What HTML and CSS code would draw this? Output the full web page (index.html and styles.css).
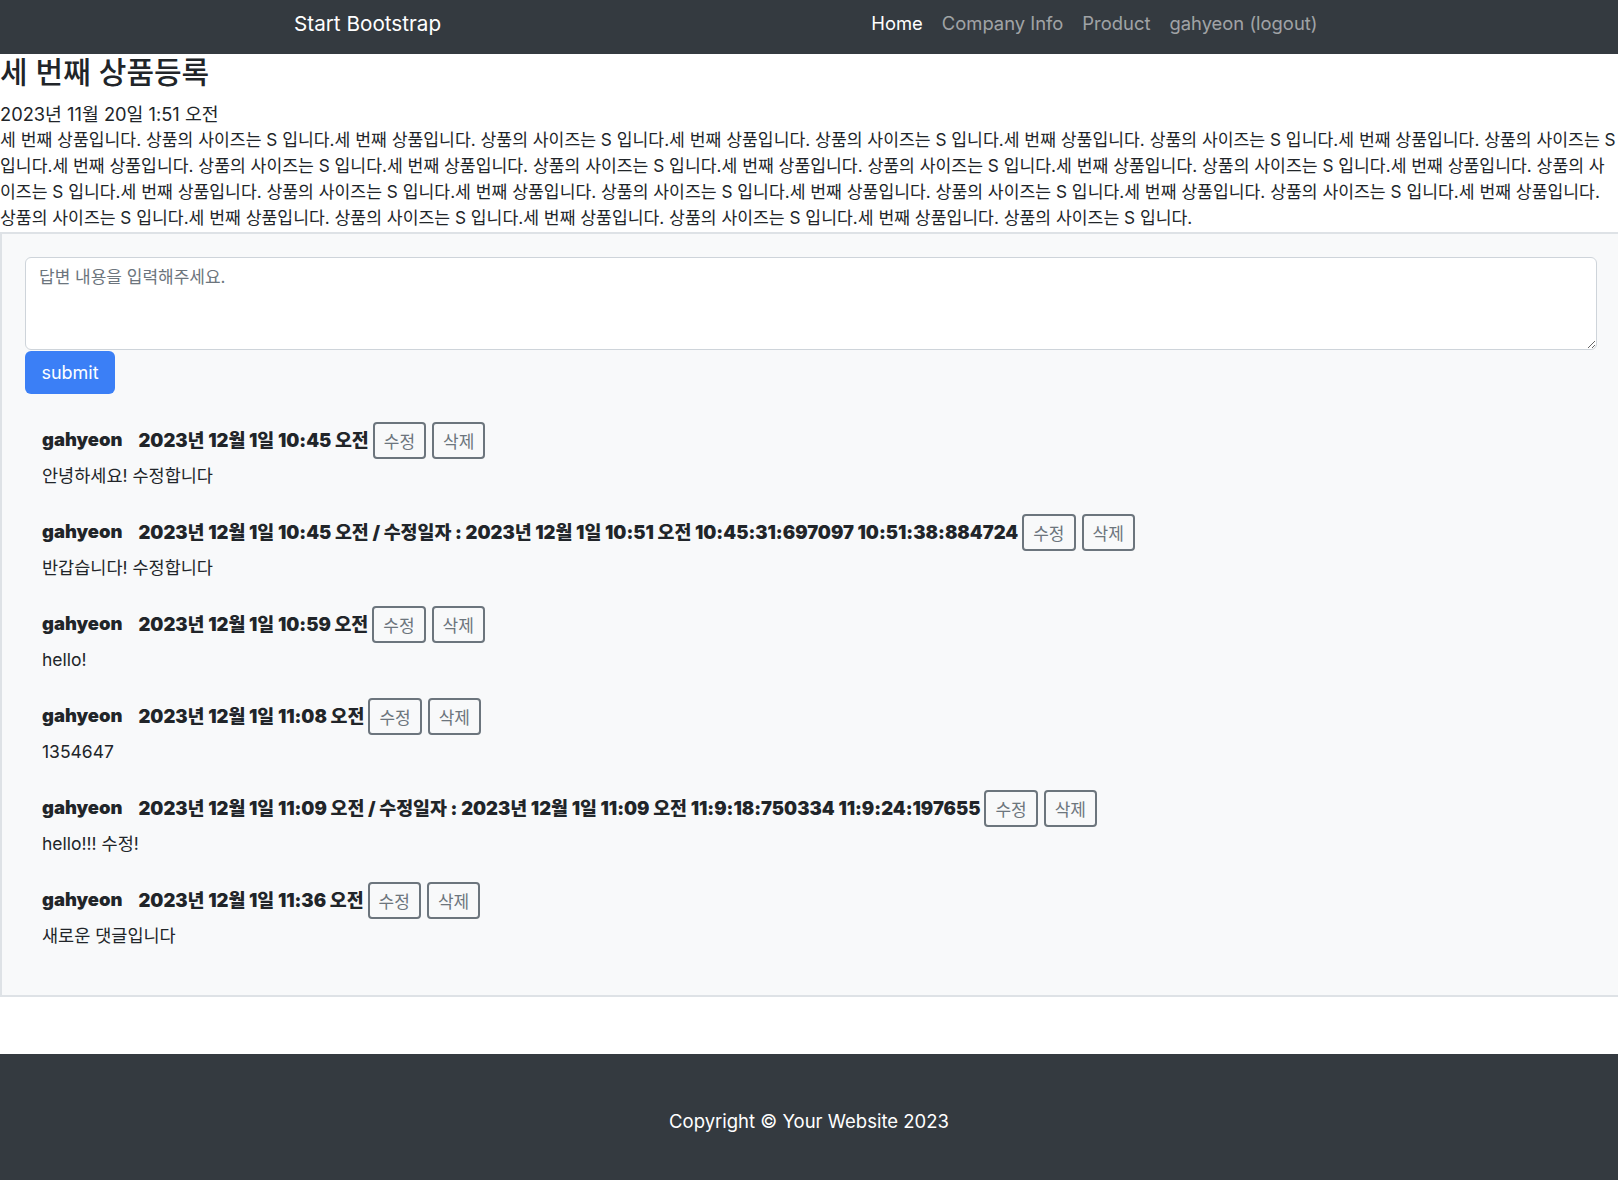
FILE: index.html
```html
<!DOCTYPE html>
<html lang="ko">
<head>
<meta charset="utf-8">
<title>세 번째 상품등록</title>
<link rel="stylesheet" href="styles.css">
</head>
<body>
<nav class="navbar">
  <div class="nav-inner">
    <a class="brand" href="#">Start Bootstrap</a>
    <ul class="nav-links">
      <li><a class="nav-link active" href="#">Home</a></li>
      <li><a class="nav-link" href="#">Company Info</a></li>
      <li><a class="nav-link" href="#">Product</a></li>
      <li><a class="nav-link" href="#">gahyeon (logout)</a></li>
    </ul>
  </div>
</nav>

<main class="main">
  <h3 class="title">세 번째 상품등록</h3>
  <div class="date">2023년 11월 20일 1:51 오전</div>
  <div class="desc">세 번째 상품입니다. 상품의 사이즈는 S 입니다.세 번째 상품입니다. 상품의 사이즈는 S 입니다.세 번째 상품입니다. 상품의 사이즈는 S 입니다.세 번째 상품입니다. 상품의 사이즈는 S 입니다.세 번째 상품입니다. 상품의 사이즈는 S 입니다.세 번째 상품입니다. 상품의 사이즈는 S 입니다.세 번째 상품입니다. 상품의 사이즈는 S 입니다.세 번째 상품입니다. 상품의 사이즈는 S 입니다.세 번째 상품입니다. 상품의 사이즈는 S 입니다.세 번째 상품입니다. 상품의 사이즈는 S 입니다.세 번째 상품입니다. 상품의 사이즈는 S 입니다.세 번째 상품입니다. 상품의 사이즈는 S 입니다.세 번째 상품입니다. 상품의 사이즈는 S 입니다.세 번째 상품입니다. 상품의 사이즈는 S 입니다.세 번째 상품입니다. 상품의 사이즈는 S 입니다.세 번째 상품입니다. 상품의 사이즈는 S 입니다.세 번째 상품입니다. 상품의 사이즈는 S 입니다.세 번째 상품입니다. 상품의 사이즈는 S 입니다.</div>

  <section class="answers">
    <form class="answer-form">
      <textarea class="answer-input" rows="3" placeholder="답변 내용을 입력해주세요."></textarea>
      <button type="button" class="btn-submit">submit</button>
    </form>

    <div class="comment-list">
      <div class="comment">
        <div class="comment-head">
          <strong class="author">gahyeon</strong>
          <strong class="stamp">2023년 12월 1일 10:45 오전</strong>
          <button type="button" class="btn-small">수정</button>
          <button type="button" class="btn-small">삭제</button>
        </div>
        <p class="comment-body">안녕하세요! 수정합니다</p>
      </div>
      <div class="comment">
        <div class="comment-head">
          <strong class="author">gahyeon</strong>
          <strong class="stamp">2023년 12월 1일 10:45 오전 / 수정일자 : 2023년 12월 1일 10:51 오전 10:45:31:697097 10:51:38:884724</strong>
          <button type="button" class="btn-small">수정</button>
          <button type="button" class="btn-small">삭제</button>
        </div>
        <p class="comment-body">반갑습니다! 수정합니다</p>
      </div>
      <div class="comment">
        <div class="comment-head">
          <strong class="author">gahyeon</strong>
          <strong class="stamp">2023년 12월 1일 10:59 오전</strong>
          <button type="button" class="btn-small">수정</button>
          <button type="button" class="btn-small">삭제</button>
        </div>
        <p class="comment-body">hello!</p>
      </div>
      <div class="comment">
        <div class="comment-head">
          <strong class="author">gahyeon</strong>
          <strong class="stamp">2023년 12월 1일 11:08 오전</strong>
          <button type="button" class="btn-small">수정</button>
          <button type="button" class="btn-small">삭제</button>
        </div>
        <p class="comment-body">1354647</p>
      </div>
      <div class="comment">
        <div class="comment-head">
          <strong class="author">gahyeon</strong>
          <strong class="stamp">2023년 12월 1일 11:09 오전 / 수정일자 : 2023년 12월 1일 11:09 오전 11:9:18:750334 11:9:24:197655</strong>
          <button type="button" class="btn-small">수정</button>
          <button type="button" class="btn-small">삭제</button>
        </div>
        <p class="comment-body">hello!!! 수정!</p>
      </div>
      <div class="comment">
        <div class="comment-head">
          <strong class="author">gahyeon</strong>
          <strong class="stamp">2023년 12월 1일 11:36 오전</strong>
          <button type="button" class="btn-small">수정</button>
          <button type="button" class="btn-small">삭제</button>
        </div>
        <p class="comment-body">새로운 댓글입니다</p>
      </div>
    </div>
  </section>
</main>

<footer class="footer">
  <p class="copyright">Copyright © Your Website 2023</p>
</footer>
</body>
</html>
```

FILE: styles.css
```css
* {
  box-sizing: border-box;
}

html, body {
  margin: 0;
  padding: 0;
}

body {
  font-family: Inter, "Noto Sans CJK KR", sans-serif;
  color: #212529;
  background: #ffffff;
  overflow-x: hidden;
}

a {
  text-decoration: none;
}

/* ---------- navbar ---------- */
.navbar {
  background: #343a40;
  height: 54px;
}

.nav-inner {
  width: 1030px;
  height: 54px;
  margin: 0 auto;
  display: flex;
  align-items: center;
  justify-content: space-between;
}

.brand {
  color: #ffffff;
  font-size: 20.7px;
  font-weight: 400;
  line-height: 30px;
  margin-top: -7px;
}

.nav-links {
  list-style: none;
  margin: -8px -3px 0 0;
  padding: 0;
  display: flex;
}

.nav-link {
  display: block;
  padding: 0 9.5px;
  font-size: 18.4px;
  line-height: 26px;
  color: rgba(255, 255, 255, 0.55);
}

.nav-link.active {
  color: #ffffff;
}

/* ---------- product ---------- */
.main {
  padding: 0;
}

.title {
  margin: 0 0 11px;
  font-size: 30px;
  font-weight: 500;
  line-height: 36px;
}

.date {
  font-size: 18.3px;
  line-height: 26px;
}

.desc {
  font-size: 17.2px;
  line-height: 26px;
}

/* ---------- answers card ---------- */
.answers {
  margin-top: 1px;
  background: #f8f9fa;
  border: 2px solid #dee2e6;
  border-right: none;
  padding: 23px 21px 21px 23px;
}

.answer-form {
  margin: 0;
}

.answer-input {
  display: block;
  width: 100%;
  height: 93px;
  padding: 6px 13px;
  font-family: inherit;
  font-size: 17px;
  line-height: 26px;
  color: #212529;
  background: #ffffff;
  border: 1px solid #ced4da;
  border-radius: 6px;
  resize: vertical;
}

.answer-input::placeholder {
  color: #6c757d;
}

.btn-submit {
  display: block;
  margin-top: 1px;
  width: 90px;
  height: 43px;
  padding: 0;
  border: none;
  border-radius: 6px;
  background: #3b7ff6;
  color: #ffffff;
  font-family: inherit;
  font-size: 18px;
  cursor: pointer;
}

.comment-list {
  margin-top: 28px;
  padding-left: 17px;
}

.comment {
  margin-bottom: 25.5px;
}

.comment-head {
  display: flex;
  align-items: center;
  height: 37px;
  font-size: 18.4px;
  font-weight: 700;
}

.author,
.stamp {
  margin-bottom: 4px;
}

.author {
  margin-right: 16px;
}

.stamp {
  margin-right: 4px;
}

.btn-small {
  height: 37px;
  padding: 0 9px;
  margin-left: 0;
  margin-right: 6px;
  background: transparent;
  border: 2px solid #6c757d;
  border-radius: 4px;
  color: #6c757d;
  font-family: inherit;
  font-size: 17px;
  font-weight: 400;
}

.comment-body {
  margin: 3.5px 0 0;
  font-size: 17.5px;
  line-height: 26px;
}

/* ---------- footer ---------- */
.footer {
  margin-top: 57px;
  background: #343a40;
  padding: 54px 0 52px;
}

.copyright {
  margin: 0;
  text-align: center;
  color: #ffffff;
  font-size: 18.5px;
  line-height: 26px;
}
```
